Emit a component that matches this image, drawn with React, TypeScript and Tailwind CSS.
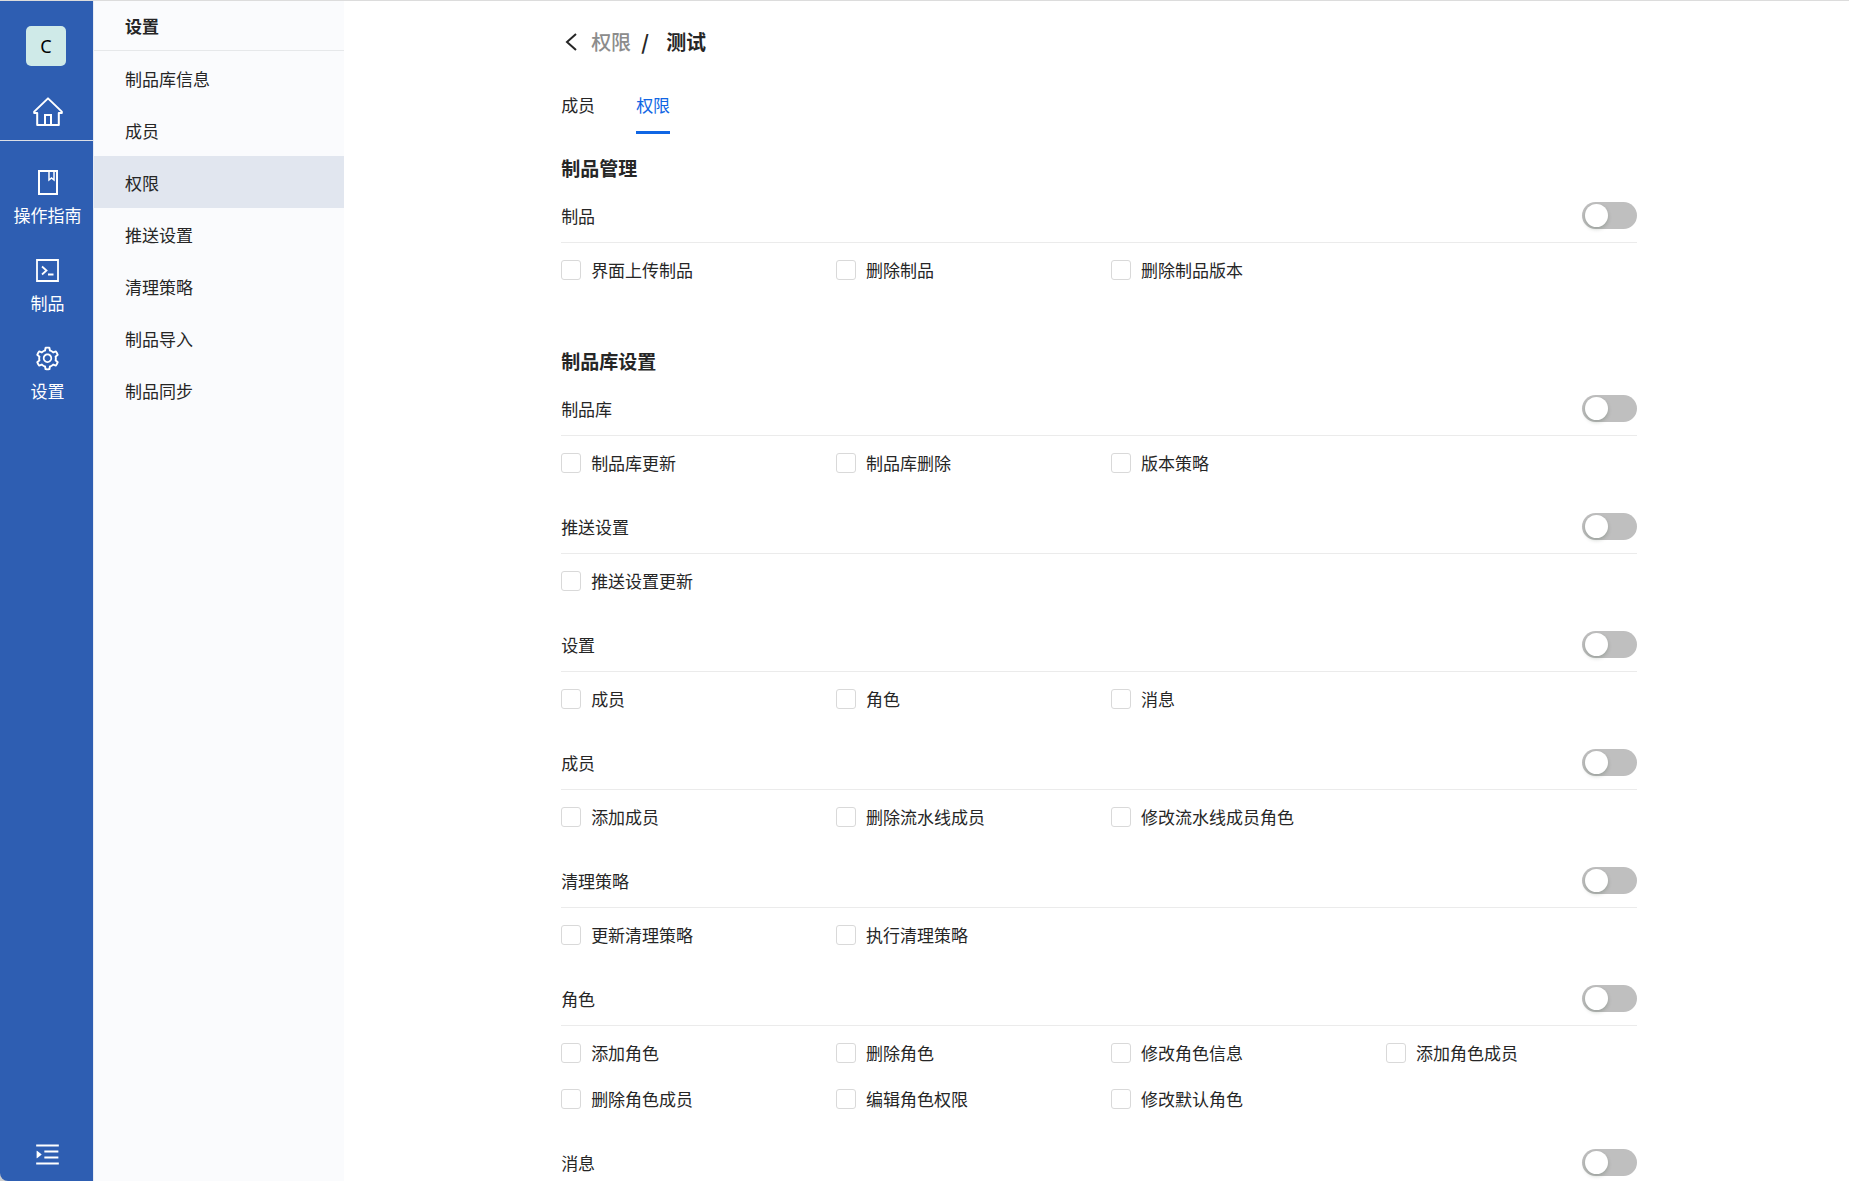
import { ReactNode, useState } from "react";
import { AiOutlineMenuUnfold, AiOutlineSetting } from "react-icons/ai";

type Permission = { title: string; items: string[] };
type PermissionGroup = { title: string; permissions: Permission[] };

const menus = ["制品库信息", "成员", "权限", "推送设置", "清理策略", "制品导入", "制品同步"];

const groups: PermissionGroup[] = [
    {
        title: "制品管理",
        permissions: [{ title: "制品", items: ["界面上传制品", "删除制品", "删除制品版本"] }],
    },
    {
        title: "制品库设置",
        permissions: [
            { title: "制品库", items: ["制品库更新", "制品库删除", "版本策略"] },
            { title: "推送设置", items: ["推送设置更新"] },
            { title: "设置", items: ["成员", "角色", "消息"] },
            { title: "成员", items: ["添加成员", "删除流水线成员", "修改流水线成员角色"] },
            { title: "清理策略", items: ["更新清理策略", "执行清理策略"] },
            {
                title: "角色",
                items: [
                    "添加角色",
                    "删除角色",
                    "修改角色信息",
                    "添加角色成员",
                    "删除角色成员",
                    "编辑角色权限",
                    "修改默认角色",
                ],
            },
            { title: "消息", items: [] },
        ],
    },
];

const HomeIcon = () => (
    <svg width="30" height="30" viewBox="0 0 30 30" fill="none" stroke="currentColor" strokeWidth="2">
        <path d="M15 1.4 1.2 14.6V16H4.2V28H25.8V16H28.8V14.6Z" strokeLinejoin="round" />
        <path d="M12 28V18H18V28" />
    </svg>
);

const BookIcon = () => (
    <svg width="20" height="25" viewBox="0 0 20 25" fill="none" stroke="currentColor">
        <path d="M1 1H19V24H1Z" strokeWidth="2" />
        <path d="M11 1V10L13.5 8L16 10V1" strokeWidth="1.5" />
    </svg>
);

const TerminalIcon = () => (
    <svg width="23" height="23" viewBox="0 0 23 23" fill="none" stroke="currentColor">
        <path d="M1 1H22V22H1Z" strokeWidth="1.8" />
        <path d="M6 7.5 10.5 11.5 6 15.5M12 15.5H17.5" strokeWidth="1.8" />
    </svg>
);

const NavItem = ({ icon, label }: { icon: ReactNode; label: string }) => (
    <a href="#" className="flex flex-col items-center gap-1.5">
        <span className="flex h-[26px] items-center">{icon}</span>
        <span className="text-[17px] leading-[27px] whitespace-nowrap">{label}</span>
    </a>
);

const PermissionBlock = ({ title, items }: Permission) => {
    const [checked, setChecked] = useState<string[]>([]);

    const allChecked = items.length > 0 && checked.length === items.length;

    const toggleItem = (item: string) => {
        setChecked((prev) => (prev.includes(item) ? prev.filter((i) => i !== item) : [...prev, item]));
    };

    return (
        <div className="mb-3.5">
            <label className="flex h-[54px] items-center justify-between border-b border-[#ebebeb]">
                {title}
                <input
                    type="checkbox"
                    role="switch"
                    checked={allChecked}
                    onChange={() => setChecked(allChecked ? [] : items)}
                    className="flex h-[27px] w-[55px] cursor-pointer appearance-none items-center rounded-full bg-[#bfbfbf] px-[3px] before:size-[23px] before:rounded-full before:bg-white before:shadow-[0_2px_4px_rgba(0,35,11,0.2)] checked:justify-end checked:bg-[#1066e4]"
                />
            </label>
            <div className="grid grid-cols-4 gap-x-6 pt-1">
                {items.map((item) => (
                    <label key={item} className="flex h-[46px] items-center gap-2.5 whitespace-nowrap">
                        <input
                            type="checkbox"
                            checked={checked.includes(item)}
                            onChange={() => toggleItem(item)}
                            className="size-5 shrink-0 cursor-pointer appearance-none rounded-[3px] border border-[#d9d9d9] bg-white checked:border-[#1066e4] checked:bg-[#1066e4]"
                        />
                        <span className="pb-0.5">{item}</span>
                    </label>
                ))}
            </div>
        </div>
    );
};

const App = () => {
    return (
        <div className="flex h-screen overflow-hidden border-t border-[#dcdcdc] bg-white font-['Noto_Sans_CJK_SC',sans-serif] text-[17px] leading-[27px] text-[#262626]">
            <div className="flex shrink-0 bg-[#d0d0d0]">
                <aside className="flex w-[93px] flex-col rounded-bl-lg bg-[#2e5eb2] text-white">
                    <div className="flex flex-col items-center border-b border-[#dcdfe6] pt-[25px] pr-px pb-[13px]">
                        <div className="flex size-10 items-center justify-center rounded-[5px] bg-[#cfeae8] font-['Noto_Sans',sans-serif] text-lg text-black">
                            C
                        </div>
                        <a href="#" aria-label="首页" className="mt-[31px] ml-[3px]">
                            <HomeIcon />
                        </a>
                    </div>
                    <nav className="flex flex-1 flex-col gap-[29px] pt-7 pl-0.5">
                        <NavItem icon={<BookIcon />} label="操作指南" />
                        <NavItem icon={<TerminalIcon />} label="制品" />
                        <NavItem icon={<AiOutlineSetting size={27} />} label="设置" />
                    </nav>
                    <button aria-label="展开菜单" className="mb-3 ml-0.5 flex cursor-pointer justify-center">
                        <AiOutlineMenuUnfold size={29} />
                    </button>
                </aside>
            </div>

            <aside className="w-[251px] shrink-0 border-l border-[#e6ebf4] bg-[#fafbfd]">
                <h2 className="flex h-[50px] items-center border-b border-[#e6e8ea] pl-[31px] font-bold">设置</h2>
                <nav className="pt-px">
                    {menus.map((menu) => (
                        <a
                            key={menu}
                            href="#"
                            className={`flex h-[52px] items-center pl-[31px] ${menu === "权限" ? "bg-[#e1e6ef]" : ""}`}
                        >
                            {menu}
                        </a>
                    ))}
                </nav>
            </aside>

            <main className="min-w-0 flex-1 overflow-y-auto [scrollbar-width:none]">
                <div className="mx-auto w-3/4 pt-[26px] pr-6 pl-[29px]">
                    <div className="flex h-[30px] items-center text-xl">
                        <button aria-label="返回" className="mr-3.5 ml-1 cursor-pointer">
                            <svg width="12" height="18" viewBox="0 0 12 18" fill="none" stroke="currentColor" strokeWidth="2">
                                <path d="M11 1 2 9 11 17" />
                            </svg>
                        </button>
                        <a href="#" className="font-medium text-[#8c8c8c]">
                            权限
                        </a>
                        <span className="mx-2.5 w-[15px] font-bold">/</span>
                        <span className="font-bold">测试</span>
                    </div>

                    <div className="mt-[34px] flex gap-[41px]">
                        <button className="cursor-pointer border-b-3 border-transparent pb-[13px]">成员</button>
                        <button className="cursor-pointer border-b-3 border-[#1066e4] pb-[13px] text-[#1066e4]">权限</button>
                    </div>

                    <div className="flex flex-col gap-10 pt-5">
                        {groups.map((group) => (
                            <section key={group.title}>
                                <h3 className="mb-[7px] text-[19px] leading-7 font-bold">{group.title}</h3>
                                {group.permissions.map((permission) => (
                                    <PermissionBlock key={permission.title} {...permission} />
                                ))}
                            </section>
                        ))}
                    </div>
                </div>
            </main>
        </div>
    );
};

export default App;
